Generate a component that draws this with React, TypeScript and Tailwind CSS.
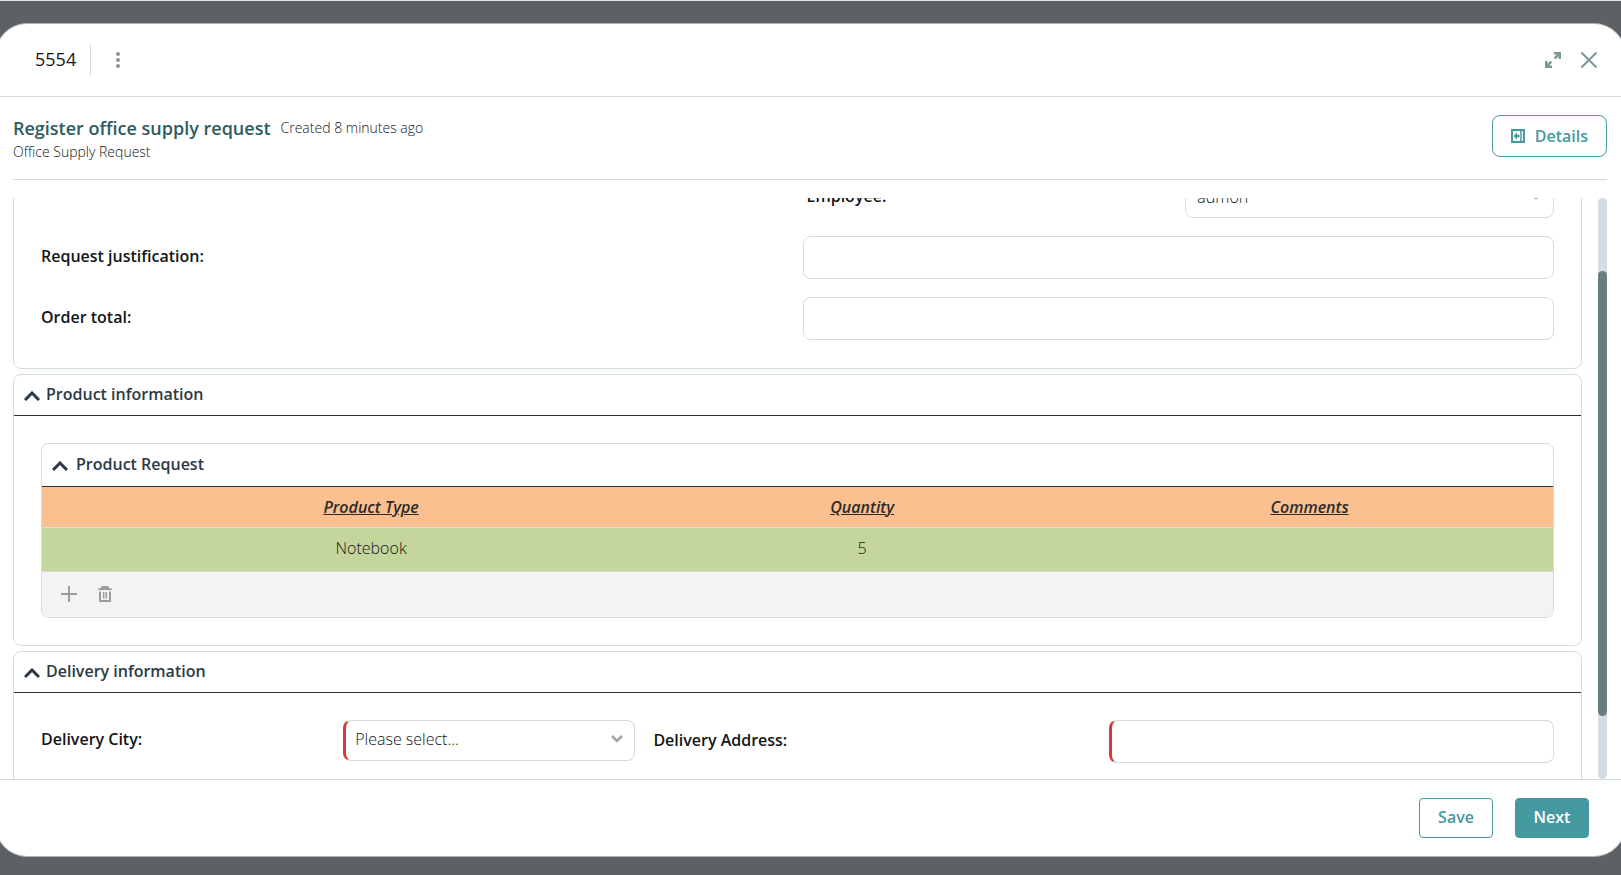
import React, { useEffect, useRef, useState } from 'react';

interface ScrollInfo {
  top: number;
  view: number;
  total: number;
}

interface ProductRow {
  type: string;
  quantity: string;
  comments: string;
}

const products: ProductRow[] = [{ type: 'Notebook', quantity: '5', comments: '' }];

const labelClass = 'pb-[3px] font-semibold';
const inputClass = 'h-[43px] w-[calc(50%-5px)] rounded-lg border border-[#d2dcdd] bg-white px-3 text-base font-light outline-none';

export default function App() {
  const scroller = useRef<HTMLDivElement>(null);
  const [scroll, setScroll] = useState<ScrollInfo>({ top: 0, view: 1, total: 1 });

  const measure = () => {
    const el = scroller.current;
    if (el) setScroll({ top: el.scrollTop, view: el.clientHeight, total: el.scrollHeight });
  };

  useEffect(() => {
    if (scroller.current) scroller.current.scrollTop = 95;
    measure();
    window.addEventListener('resize', measure);
    return () => window.removeEventListener('resize', measure);
  }, []);

  return (
    <div className="flex h-screen flex-col overflow-hidden border-t border-[#dde5e4] bg-[#5d6164] pt-[22px] pb-[18px] font-['Open_Sans','Noto_Sans',sans-serif] text-[#121515]">
      <div role="dialog" aria-labelledby="case-number" className="-mx-[5px] flex min-h-0 flex-1 flex-col overflow-hidden rounded-[32px] border border-[#b0b4b5] bg-white px-1">
        {/* Window bar */}
        <header className="flex h-[73px] shrink-0 items-center border-b border-[#d2dcdd] pr-6 pl-[35px]">
          <h1 id="case-number" className="pb-0.5 text-lg font-normal">5554</h1>
          <div className="ml-3.5 h-[30px] w-px bg-[#d2dcdd]" />
          <button aria-label="More options" className="ml-[19px] text-[#7f9798]">
            <svg width="16" height="16" viewBox="0 0 16 16" fill="currentColor">
              <circle cx="8" cy="2" r="2" /><circle cx="8" cy="8" r="2" /><circle cx="8" cy="14" r="2" />
            </svg>
          </button>
          <div className="ml-auto flex items-center gap-5 text-[#7f9798]">
            <button aria-label="Expand">
              <svg width="16" height="16" viewBox="0 0 16 16" fill="currentColor">
                <path d="M9 0h7v7h-2.4V4.2l-3 3-1.8-1.8 3-3H9zM0 9h2.4v2.8l3-3 1.8 1.8-3 3H7V16H0z" />
              </svg>
            </button>
            <button aria-label="Close">
              <svg width="16" height="16" viewBox="0 0 16 16" fill="none" stroke="currentColor" strokeWidth="2">
                <path d="M.5.5l15 15M15.5.5l-15 15" />
              </svg>
            </button>
          </div>
        </header>

        {/* Activity title */}
        <div className="mr-3.5 ml-[13px] flex h-[83px] shrink-0 items-start justify-between border-b border-[#d2dcdd] pt-[18px]">
          <div>
            <div className="flex items-center gap-2.5">
              <h2 className="text-lg leading-[26px] font-semibold text-[#2d5c60]">Register office supply request</h2>
              <span className="text-sm font-light">Created 8 minutes ago</span>
            </div>
            <p className="text-sm leading-[22px] font-light">Office Supply Request</p>
          </div>
          <button className="flex h-[42px] items-center gap-2.5 rounded-lg border border-[#459aa0] px-[18px] font-semibold text-[#459aa0]">
            <svg width="14" height="14" viewBox="0 0 14 14" fill="none" stroke="currentColor" strokeWidth="2">
              <rect x="1" y="1" width="12" height="12" />
              <path d="M10 1v12" strokeWidth="1.5" />
              <path d="M2.5 7L6 3.6v2.2h2.5v2.4H6v2.2z" fill="currentColor" stroke="none" />
            </svg>
            Details
          </button>
        </div>

        {/* Form */}
        <div className="mr-3.5 ml-[13px] mt-[18px] flex min-h-0 flex-1">
          <div ref={scroller} onScroll={measure} className="min-w-0 flex-1 overflow-y-auto pb-2 [scrollbar-width:none]">
            <section className="rounded-lg border border-[#d2dcdd] px-[27px] pt-[73px] pb-7">
              <div className="grid grid-cols-2 gap-[18px]">
                <div className="col-start-2 flex items-center justify-between">
                  <label htmlFor="employee" className={labelClass}>Employee:</label>
                  <SelectBox id="employee" value="admon" />
                </div>
              </div>
              <div className="mt-[18px] flex flex-col gap-[18px]">
                <div className="flex items-center justify-between">
                  <label htmlFor="justification" className={labelClass}>Request justification:</label>
                  <input id="justification" type="text" className={inputClass} />
                </div>
                <div className="flex items-center justify-between">
                  <label htmlFor="total" className={labelClass}>Order total:</label>
                  <input id="total" type="text" className={inputClass} />
                </div>
              </div>
            </section>

            <Panel title="Product information">
              <div className="px-[27px] py-[27px]">
                <div className="overflow-hidden rounded-lg border border-[#d2dcdd]">
                  <button className="flex h-[43px] w-full items-center gap-2 border-b border-[#27313c] px-2.5 pb-0.5 font-semibold text-[#2b3946]">
                    <Caret />
                    Product Request
                  </button>
                  <table className="w-full table-fixed text-center">
                    <colgroup>
                      <col className="w-[42px]" />
                      <col className="w-[38%]" />
                      <col className="w-[27%]" />
                      <col />
                    </colgroup>
                    <thead>
                      <tr className="h-10 border-b border-[#e0dfd0] bg-[#fbc090] text-[#2b2b2b] italic underline">
                        <td />
                        <th className="font-semibold">Product Type</th>
                        <th className="font-semibold">Quantity</th>
                        <th className="font-semibold">Comments</th>
                      </tr>
                    </thead>
                    <tbody>
                      {products.map(p => (
                        <tr key={p.type} className="h-11 border-b border-[#d2dcdd] bg-[#c4d69b] font-light">
                          <td />
                          <td className="pb-0.5">{p.type}</td>
                          <td className="pb-0.5">{p.quantity}</td>
                          <td className="pb-0.5">{p.comments}</td>
                        </tr>
                      ))}
                    </tbody>
                  </table>
                  <div className="flex h-[45px] items-center gap-[21px] bg-[#f1f3f5] px-[19px] text-[#9c9c9c]">
                    <button aria-label="Add row">
                      <svg width="16" height="16" viewBox="0 0 16 16" fill="none" stroke="currentColor" strokeWidth="2">
                        <path d="M8 0v16M0 8h16" />
                      </svg>
                    </button>
                    <button aria-label="Delete row">
                      <svg width="14" height="16" viewBox="0 0 14 16" fill="none" stroke="currentColor" strokeWidth="2">
                        <path d="M0 4V2.5h2L4 0h6l2 2.5h2V4z" fill="currentColor" stroke="none" />
                        <path d="M2 5.5V15h10V5.5" />
                        <path d="M5.7 6v6.5M8.3 6v6.5" strokeWidth="1.5" />
                      </svg>
                    </button>
                  </div>
                </div>
              </div>
            </Panel>

            <Panel title="Delivery information">
              <div className="grid grid-cols-[33fr_50fr] items-start gap-[18px] px-[27px] pt-[27px] pb-[89px]">
                <div className="flex items-center justify-between">
                  <label htmlFor="city" className={labelClass}>Delivery City:</label>
                  <SelectBox id="city" value="Please select..." required />
                </div>
                <div className="flex items-center justify-between">
                  <label htmlFor="address" className={labelClass}>Delivery Address:</label>
                  <input id="address" type="text" required className={inputClass + ' border-l-3 border-l-[#d93636]'} />
                </div>
              </div>
            </Panel>
          </div>

          <div className="ml-4 w-[9px] shrink-0 overflow-hidden rounded-full bg-[#d4dddf]">
            <div
              className="rounded-full bg-[#687d80]"
              style={{
                height: `${(scroll.view / scroll.total) * 100}%`,
                marginTop: `${(scroll.top / scroll.total) * scroll.view}px`,
              }}
            />
          </div>
        </div>

        {/* Actions */}
        <footer className="flex h-[77px] shrink-0 items-start justify-end gap-[22px] border-t border-[#d2dcdd] pt-[18px] pr-8">
          <button className="h-10 w-[74px] rounded border border-[#459aa0] pb-0.5 font-semibold text-[#459aa0]">Save</button>
          <button className="h-10 w-[74px] rounded border border-[#459aa0] bg-[#459aa0] pb-0.5 font-semibold text-white">Next</button>
        </footer>
      </div>
    </div>
  );
}

function Panel({ title, children }: { title: string; children: React.ReactNode }) {
  return (
    <section className="mt-[5px] rounded-lg border border-[#d2dcdd]">
      <button className="flex h-[41px] w-full items-center gap-1.5 border-b border-[#27313c] px-2.5 pb-0.5 font-semibold text-[#2b3946]">
        <Caret />
        {title}
      </button>
      {children}
    </section>
  );
}

function Caret() {
  return (
    <svg width="16" height="10" viewBox="0 0 16 10" fill="none" stroke="#2b3946" strokeWidth="3" className="mt-1">
      <path d="M1 9l7-7 7 7" />
    </svg>
  );
}

function SelectBox({ id, value, required }: { id: string; value: string; required?: boolean }) {
  return (
    <div className="relative w-[calc(50%-5px)]">
      <select
        id={id}
        className={
          'h-[41px] w-full appearance-none rounded-lg border border-[#d2dcdd] bg-white pr-8 pb-0.5 text-base font-light outline-none ' +
          (required ? 'border-l-3 border-l-[#d93636] pl-[9px]' : 'pl-[11px]')
        }
      >
        <option>{value}</option>
      </select>
      <svg width="12" height="8" viewBox="0 0 12 8" fill="none" stroke="#a3a3a3" strokeWidth="2.5" className="pointer-events-none absolute top-[15px] right-3">
        <path d="M1 1l5 5 5-5" />
      </svg>
    </div>
  );
}
